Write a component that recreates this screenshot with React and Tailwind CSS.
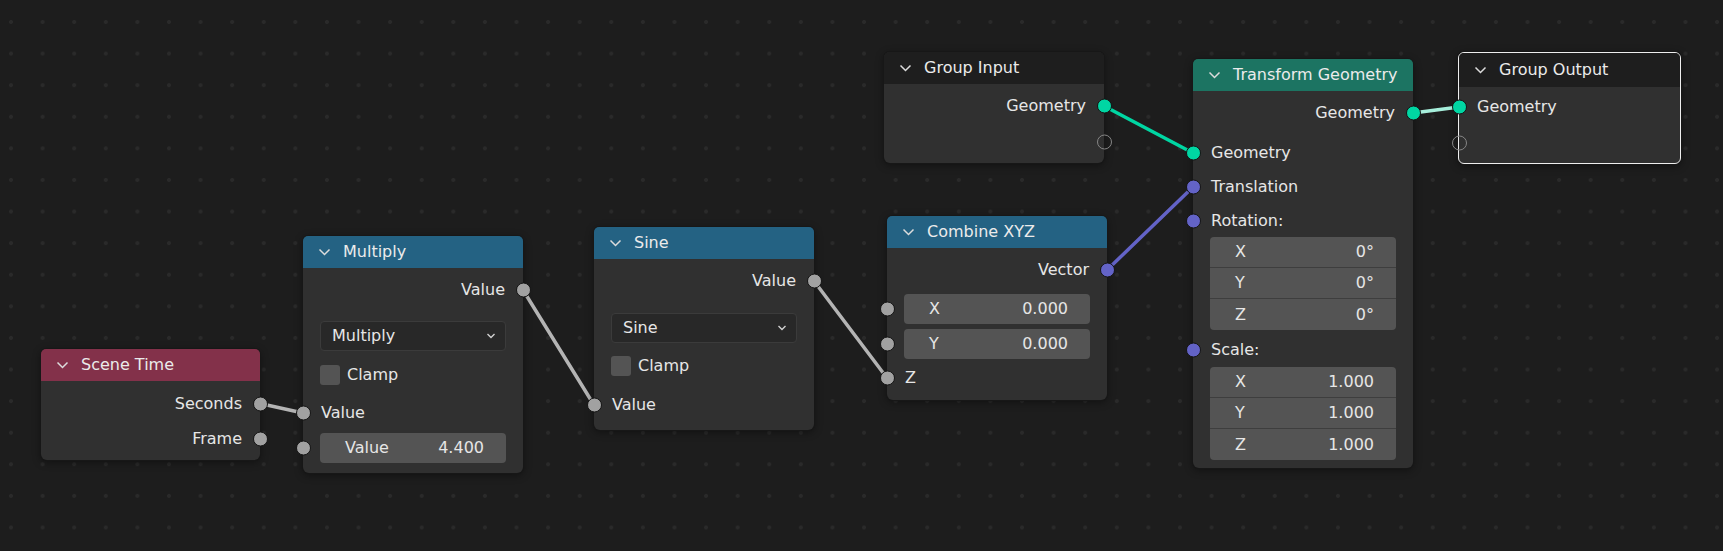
import React from "react";

const Chevron = () => (
  <svg width="13" height="8" viewBox="0 0 13 8" className="shrink-0">
    <path d="M1.5 1.5 L6.5 6.5 L11.5 1.5" fill="none" stroke="#dcdcdc" strokeWidth="1.5" />
  </svg>
);

const SmallChevron = () => (
  <svg width="10" height="6" viewBox="0 0 10 6" className="shrink-0">
    <path d="M1.5 1 L5 4.5 L8.5 1" fill="none" stroke="#d0d0d0" strokeWidth="1.4" />
  </svg>
);

const Socket = ({ side, color }) => (
  <span
    className={`absolute top-1/2 -translate-y-1/2 w-[15px] h-[15px] rounded-full border border-[#141414] ${
      side === "left" ? "-left-[7.5px]" : "-right-[7.5px]"
    } ${color}`}
  />
);

const EmptySocket = ({ side }) => (
  <span
    className={`absolute top-1/2 -translate-y-1/2 w-[15px] h-[15px] rounded-full border-[1.5px] border-[#858585] ${
      side === "left" ? "-left-[7.5px]" : "-right-[7.5px]"
    }`}
  />
);

const GRAY = "bg-[#a1a1a1]";
const TEAL = "bg-[#00d6a3]";
const PURPLE = "bg-[#6363c7]";

const Node = ({ className, header, headerClass = "h-[32px]", title, children }) => (
  <div className={`absolute rounded-[6px] bg-[#303030] shadow-[0_0_0_1px_#171717,0_2px_8px_rgba(0,0,0,0.45)] ${className}`}>
    <div className={`flex items-center gap-[12px] pl-[15px] rounded-t-[5px] ${headerClass} ${header}`}>
      <Chevron />
      <span className="text-[#ebebeb]">{title}</span>
    </div>
    {children}
  </div>
);

const Out = ({ label, color, h = "h-[36px]", mt = "" }) => (
  <div className={`relative flex items-center justify-end pr-[18px] ${h} ${mt}`}>
    <span>{label}</span>
    {color ? <Socket side="right" color={color} /> : <EmptySocket side="right" />}
  </div>
);

const In = ({ label, color, h = "h-[36px]", mt = "" }) => (
  <div className={`relative flex items-center pl-[18px] ${h} ${mt}`}>
    <span>{label}</span>
    {color ? <Socket side="left" color={color} /> : <EmptySocket side="left" />}
  </div>
);

const Field = ({ label, value, socket, mt = "" }) => (
  <div className={`relative h-[30px] ${mt}`}>
    <div className="mx-[17px] h-full rounded-[4px] bg-[#545454] flex items-center justify-between pl-[25px] pr-[22px]">
      <span>{label}</span>
      <span>{value}</span>
    </div>
    {socket && <Socket side="left" color={GRAY} />}
  </div>
);

const Dropdown = ({ label, mt }) => (
  <div className={`mx-[17px] h-[30px] rounded-[4px] bg-[#282828] border border-[#3b3b3b] flex items-center justify-between pl-[11px] pr-[9px] ${mt}`}>
    <span>{label}</span>
    <SmallChevron />
  </div>
);

const Clamp = ({ h, mt }) => (
  <div className={`flex items-center gap-[7px] px-[17px] ${h} ${mt}`}>
    <span className="w-[20px] h-[20px] rounded-[3px] bg-[#545454]" />
    <span>Clamp</span>
  </div>
);

const VecField = ({ rows }) => (
  <div className="mx-[17px] rounded-[4px] bg-[#545454] divide-y divide-[#3e3e3e]">
    {rows.map(([k, v]) => (
      <div key={k} className="h-[31px] flex items-center justify-between pl-[25px] pr-[22px]">
        <span>{k}</span>
        <span>{v}</span>
      </div>
    ))}
  </div>
);

const links = [
  { a: [260, 403.5], b: [303, 413], c: "#b4b4b4" },
  { a: [523, 290], b: [594, 405], c: "#b4b4b4" },
  { a: [814, 281], b: [887, 378], c: "#b4b4b4" },
  { a: [1104, 106], b: [1193, 153], c: "#00d6a3" },
  { a: [1107, 270], b: [1193, 187], c: "#6363c7" },
  { a: [1413, 113], b: [1459, 107], c: "#a6eedb" },
];

export default function App() {
  return (
    <div className="relative w-[1723px] h-[551px] overflow-hidden bg-[#1d1d1d] bg-[radial-gradient(circle,#2a2a2a_1.6px,transparent_2.3px)] bg-size-[31.6px_31.6px] bg-position-[-4.8px_6.2px] font-['DejaVu_Sans',sans-serif] text-[16px] text-[#e6e6e6]">
      <svg className="absolute inset-0" width="1723" height="551">
        {links.map((l, i) => (
          <line
            key={i}
            x1={l.a[0]}
            y1={l.a[1]}
            x2={l.b[0]}
            y2={l.b[1]}
            stroke={l.c}
            strokeWidth="3.5"
            strokeLinecap="round"
          />
        ))}
      </svg>

      <Node className="left-[41px] top-[349px] w-[219px] pb-[4px]" header="bg-[#83314a]" title="Scene Time">
        <div className="pt-[5px]">
          <Out label="Seconds" color={GRAY} h="h-[35px]" />
          <Out label="Frame" color={GRAY} h="h-[35px]" />
        </div>
      </Node>

      <Node className="left-[303px] top-[236px] w-[220px] pb-[10px]" header="bg-[#246283]" title="Multiply">
        <div className="pt-[4px]">
          <Out label="Value" color={GRAY} />
          <Dropdown label="Multiply" mt="mt-[13px]" />
          <Clamp h="h-[38px]" mt="mt-[5px]" />
          <In label="Value" color={GRAY} h="h-[38px]" />
          <Field label="Value" value="4.400" socket mt="mt-[1px]" />
        </div>
      </Node>

      <Node className="left-[594px] top-[227px] w-[220px] pb-[6px]" header="bg-[#246283]" title="Sine">
        <div className="pt-[4px]">
          <Out label="Value" color={GRAY} />
          <Dropdown label="Sine" mt="mt-[14px]" />
          <Clamp h="h-[36px]" mt="mt-[5px]" />
          <In label="Value" color={GRAY} h="h-[38px]" mt="mt-[2px]" />
        </div>
      </Node>

      <Node className="left-[884px] top-[52px] w-[220px] pb-[3px]" header="bg-[#1e1e1e]" title="Group Input">
        <div className="pt-[4px]">
          <Out label="Geometry" color={TEAL} />
          <Out label="" />
        </div>
      </Node>

      <Node className="left-[887px] top-[216px] w-[220px] pb-[3px]" header="bg-[#246283]" title="Combine XYZ">
        <div className="pt-[4px]">
          <Out label="Vector" color={PURPLE} />
          <Field label="X" value="0.000" socket mt="mt-[6px]" />
          <Field label="Y" value="0.000" socket mt="mt-[5px]" />
          <In label="Z" color={GRAY} h="h-[38px]" />
        </div>
      </Node>

      <Node className="left-[1193px] top-[59px] w-[220px] pb-[8px]" header="bg-[#1c7462]" title="Transform Geometry">
        <div className="pt-[4px]">
          <Out label="Geometry" color={TEAL} />
          <In label="Geometry" color={TEAL} h="h-[34px]" mt="mt-[5px]" />
          <In label="Translation" color={PURPLE} h="h-[34px]" />
          <In label="Rotation:" color={PURPLE} h="h-[33px]" />
          <VecField rows={[["X", "0°"], ["Y", "0°"], ["Z", "0°"]]} />
          <In label="Scale:" color={PURPLE} h="h-[34px]" mt="mt-[3px]" />
          <VecField rows={[["X", "1.000"], ["Y", "1.000"], ["Z", "1.000"]]} />
        </div>
      </Node>

      <Node
        className="left-[1458px] top-[52px] w-[223px] pb-[2px] border-[1.5px] border-[#eeeeee]"
        header="bg-[#1e1e1e]"
        headerClass="h-[34px]"
        title="Group Output"
      >
        <div className="pt-[2px]">
          <In label="Geometry" color={TEAL} />
          <In label="" />
        </div>
      </Node>
    </div>
  );
}
